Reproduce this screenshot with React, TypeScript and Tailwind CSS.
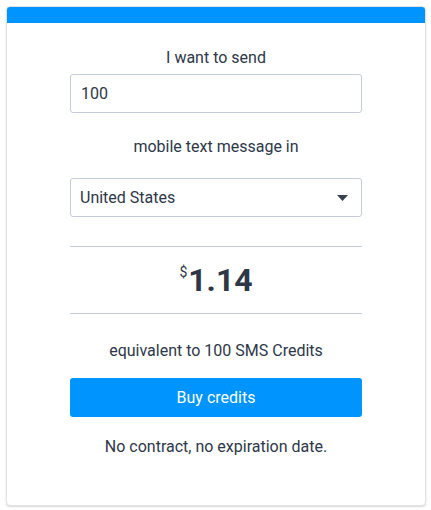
import { useState } from "react";

export default function App() {
  const [count, setCount] = useState("100");

  return (
    <div className="min-h-screen bg-white p-[6px] font-['Roboto',sans-serif] text-[#2d3748]">
      <div className="w-[420px] rounded-[4px] border border-[#e2e2e2] shadow-[0_1px_2px_rgba(0,0,0,0.15)] overflow-hidden bg-white">
        {/* top band */}
        <div className="h-4 bg-[#0094ff]" />
        <div className="flex flex-col items-center px-[63px] pt-[24px] pb-[47px] text-[16px] leading-[22px]">
          <p>I want to send</p>
          <input
            value={count}
            onChange={(e) => setCount(e.target.value)}
            className="mt-[5px] w-full h-[39px] rounded-[3px] border border-[#c3cdd9] px-[10px] text-[16px] outline-none"
          />
          <p className="mt-[23px]">mobile text message in</p>
          <div className="mt-[20px] w-full h-[39px] rounded-[3px] border border-[#c3cdd9] px-[9px] flex items-center justify-between">
            <span>United States</span>
            <svg width="11" height="6" viewBox="0 0 11 6" className="mr-[4px]">
              <path d="M0 0h11L5.5 6z" fill="#374151" />
            </svg>
          </div>
          <div className="mt-[29px] w-full border-t border-[#c3cdd9] h-[67px] flex items-center justify-center">
            <div className="flex items-start font-bold">
              <span className="text-[14px] leading-none mt-[1px] mr-[1px] font-normal">$</span>
              <span className="text-[32px] leading-none">1.14</span>
            </div>
          </div>
          <div className="w-full border-t border-[#c3cdd9]" />
          <p className="mt-[26px]">equivalent to 100 SMS Credits</p>
          <button className="mt-[16px] w-full h-[39px] rounded-[3px] bg-[#0094ff] text-white text-[16px]">
            Buy credits
          </button>
          <p className="mt-[19px]">No contract, no expiration date.</p>
        </div>
      </div>
    </div>
  );
}
